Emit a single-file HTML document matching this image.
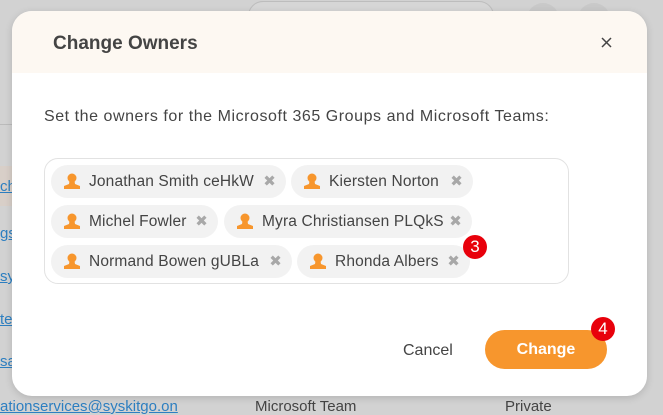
<!DOCTYPE html>
<html><head><meta charset="utf-8"><style>
*{box-sizing:border-box;margin:0;padding:0}
body{width:663px;height:406px;overflow:hidden;background:#d2d2d2;font-family:"Liberation Sans",sans-serif;position:relative}
.bgsearch{position:absolute;left:248px;top:1px;width:246px;height:30px;border:1px solid #bdbdbd;border-radius:15px;background:#d6d6d6}
.circ{position:absolute;top:3px;width:32px;height:32px;border-radius:50%;background:#c9c9c9}
.link{position:absolute;left:0;font-size:15px;color:#2d7fc1;text-decoration:underline}
.modal{position:absolute;left:12px;top:11px;width:635px;height:385px;background:#fff;border-radius:20px;overflow:hidden;box-shadow:0 2px 8px rgba(0,0,0,.15)}
.hdr{height:62px;background:#fdf8f2;position:relative}
.title{position:absolute;left:41px;top:22px;font-size:19px;font-weight:bold;color:#444}
.close{position:absolute;left:589px;top:26px}
.desc{position:absolute;left:32px;top:97px;font-size:16px;letter-spacing:0.55px;color:#444}
.box{position:absolute;left:32px;top:147px;width:525px;height:126px;border:1px solid #e2e2e2;border-radius:14px}
.chip{position:absolute;height:33px;border-radius:17px;background:#f2f2f2;font-size:15.5px;letter-spacing:0.15px;color:#444;line-height:33px;padding-left:38px;white-space:nowrap}
.chip svg{position:absolute;left:13px;top:8px}
.chip .x{position:absolute;right:10px;top:0;color:#a8a8a8;font-size:15px}
.badge{position:absolute;width:24px;height:24px;border-radius:50%;background:#e8000b;color:#fff;font-size:17px;text-align:center;line-height:24px}
.cancel{position:absolute;font-size:16px;color:#444}
.btn{position:absolute;width:122px;height:39px;border-radius:20px;background:#f7962d;color:#fff;font-weight:bold;font-size:16px;text-align:center;line-height:39px}
</style></head><body>
<div class="bgsearch"></div>
<div class="circ" style="left:527px"></div><div class="circ" style="left:578px"></div>
<div style="position:absolute;left:0;top:124px;width:12px;height:1px;background:#bbb"></div>
<div style="position:absolute;left:0;top:166px;width:12px;height:40px;background:#d8cfc8"></div>
<span class="link" style="top:178px">ch</span>
<span class="link" style="top:225px">gs</span>
<span class="link" style="top:268px">sy</span>
<span class="link" style="top:311px">te</span>
<span class="link" style="top:353px">sa</span>
<span class="link" style="top:398px;left:0">ationservices@syskitgo.on</span>
<span style="position:absolute;left:255px;top:398px;font-size:15px;color:#444">Microsoft Team</span>
<span style="position:absolute;left:505px;top:398px;font-size:15px;color:#444">Private</span>
<div class="modal">
<div class="hdr"><div class="title">Change Owners</div>
<svg class="close" width="11" height="11"><path d="M1 1L10 10M10 1L1 10" stroke="#444" stroke-width="1.5"/></svg></div>
<div class="desc">Set the owners for the Microsoft 365 Groups and Microsoft Teams:</div>
<div class="box"></div>
</div>
<svg width="0" height="0" style="position:absolute"><defs><g id="u"><circle cx="8" cy="5" r="4.5" fill="#f7962d"/><path d="M5.5 8 L10.5 8 L11 11 L16 13 L16 16 L0 16 L0 13 L5 11Z" fill="#f7962d"/></g></defs></svg>
<div class="chip" style="left:51px;top:165px;width:235px"><svg width="16" height="16"><use href="#u"/></svg>Jonathan Smith ceHkW<span class="x">✖</span></div>
<div class="chip" style="left:291px;top:165px;width:182px"><svg width="16" height="16"><use href="#u"/></svg>Kiersten Norton<span class="x">✖</span></div>
<div class="chip" style="left:51px;top:205px;width:167px"><svg width="16" height="16"><use href="#u"/></svg>Michel Fowler<span class="x">✖</span></div>
<div class="chip" style="left:224px;top:205px;width:248px"><svg width="16" height="16"><use href="#u"/></svg>Myra Christiansen PLQkS<span class="x">✖</span></div>
<div class="chip" style="left:51px;top:245px;width:241px"><svg width="16" height="16"><use href="#u"/></svg>Normand Bowen gUBLa<span class="x">✖</span></div>
<div class="chip" style="left:297px;top:245px;width:173px"><svg width="16" height="16"><use href="#u"/></svg>Rhonda Albers<span class="x">✖</span></div>
<div class="badge" style="left:463px;top:235px">3</div>
<div class="cancel" style="left:403px;top:342px">Cancel</div>
<div class="btn" style="left:485px;top:330px">Change</div>
<div class="badge" style="left:591px;top:317px">4</div>
</body></html>
